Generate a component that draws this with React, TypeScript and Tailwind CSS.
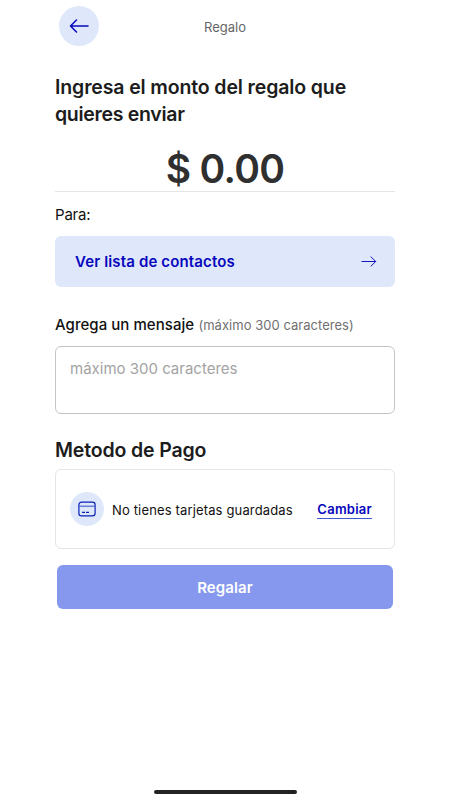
import { ReactNode } from "react";

function ArrowIcon({ className }: { className: string }) {
  return (
    <svg viewBox="0 0 20 14" fill="none" stroke="currentColor" className={className}>
      <path d="M1 7H18.5M12.5 1L18.5 7L12.5 13" strokeLinecap="round" strokeLinejoin="round" />
    </svg>
  );
}

function CardIcon() {
  return (
    <svg width="18" height="16" viewBox="0 0 18 16" fill="none" stroke="#0a1fb4" strokeWidth="1.2">
      <rect x="0.9" y="1.1" width="16.2" height="13.8" rx="2.6" />
      <path d="M1 5.2H17" stroke="#4a63d0" />
      <path d="M4 11.4H7M8 11.4H11" />
    </svg>
  );
}

function Title({ children }: { children: ReactNode }) {
  return (
    <h2 className="text-[19.5px] leading-[27px] font-semibold tracking-[-0.15px] whitespace-nowrap text-[#1c1c1c]">
      {children}
    </h2>
  );
}

export default function App() {
  return (
    <main className="flex h-[800px] w-[450px] flex-col bg-white px-[55px] font-['Inter',sans-serif] text-[#111]">
      {/* Header */}
      <header className="mt-[6px] grid h-[40px] shrink-0 grid-cols-[40px_1fr_40px] items-center px-[4px]">
        <button className="flex size-[40px] items-center justify-center rounded-full bg-[#dfe8fa] text-[#0707bd]">
          <ArrowIcon className="h-[14px] w-5 rotate-180 stroke-[1.5]" />
        </button>
        <span className="pt-px text-center text-[13px] leading-5 text-[#666]">Regalo</span>
      </header>

      {/* Amount */}
      <div className="mt-[28px]">
        <Title>
          <span className="tracking-[-0.13px]">Ingresa el monto del regalo que</span>
          <br />
          <span className="tracking-[-0.3px]">quieres enviar</span>
        </Title>
      </div>
      <div className="mt-[17px] flex h-[47px] items-end justify-center border-b border-[#e5e5e5]">
        <span className="mb-[-2px] text-[39px] leading-[48px] font-semibold tracking-[-0.7px] whitespace-nowrap text-[#2f2f2f]">
          $ 0.00
        </span>
      </div>

      {/* Recipient */}
      <p className="mt-[12px] text-[15px] leading-[22px] tracking-[-0.2px]">Para:</p>
      <button className="mt-[10px] flex h-[51px] shrink-0 items-center justify-between rounded-md bg-[#dfe8fa] pr-[18px] pl-[20px] text-[#0707bd]">
        <span className="text-[15px] leading-5 font-semibold tracking-[0.14px] whitespace-nowrap">
          Ver lista de contactos
        </span>
        <ArrowIcon className="h-[11px] w-4 stroke-[1.2]" />
      </button>

      {/* Message */}
      <label className="mt-[27px] block text-[15px] leading-[22px] whitespace-nowrap">
        <span className="font-medium tracking-[0.05px]">Agrega un mensaje</span>{" "}
        <span className="text-[13px] tracking-[0.03px] text-[#707070]">(máximo 300 caracteres)</span>
      </label>
      <textarea
        placeholder="máximo 300 caracteres"
        className="mt-[10px] block h-[68px] shrink-0 resize-none rounded-md border border-[#c4c4c4] px-[14px] py-[11px] text-[15px] leading-[22px] placeholder:text-[#a3a3a3]"
      />

      {/* Payment */}
      <div className="mt-[23px]">
        <Title>Metodo de Pago</Title>
      </div>
      <section className="mt-[5px] flex h-[80px] shrink-0 items-center rounded-md border border-[#e5e5e5] px-[14px]">
        <div className="flex size-[34px] shrink-0 items-center justify-center rounded-full bg-[#dfe8fa]">
          <CardIcon />
        </div>
        <span className="ml-2 pt-[2px] text-[13px] leading-5 tracking-[0.15px] whitespace-nowrap">
          No tienes tarjetas guardadas
        </span>
        <button className="mt-[2px] mr-[8px] ml-auto border-b border-[#4059d0] text-[13px] leading-[17px] font-semibold tracking-[0.25px] text-[#0707bd]">
          Cambiar
        </button>
      </section>
      <button className="mx-[2px] mt-[16px] h-[44px] shrink-0 rounded-md bg-[#8598ed] pt-[2px] text-[15px] font-semibold tracking-[0.1px] text-white">
        Regalar
      </button>

      {/* Home indicator */}
      <div className="mt-auto mb-[6px] h-[4px] w-[143px] shrink-0 self-center rounded-full bg-[#222]" />
    </main>
  );
}
